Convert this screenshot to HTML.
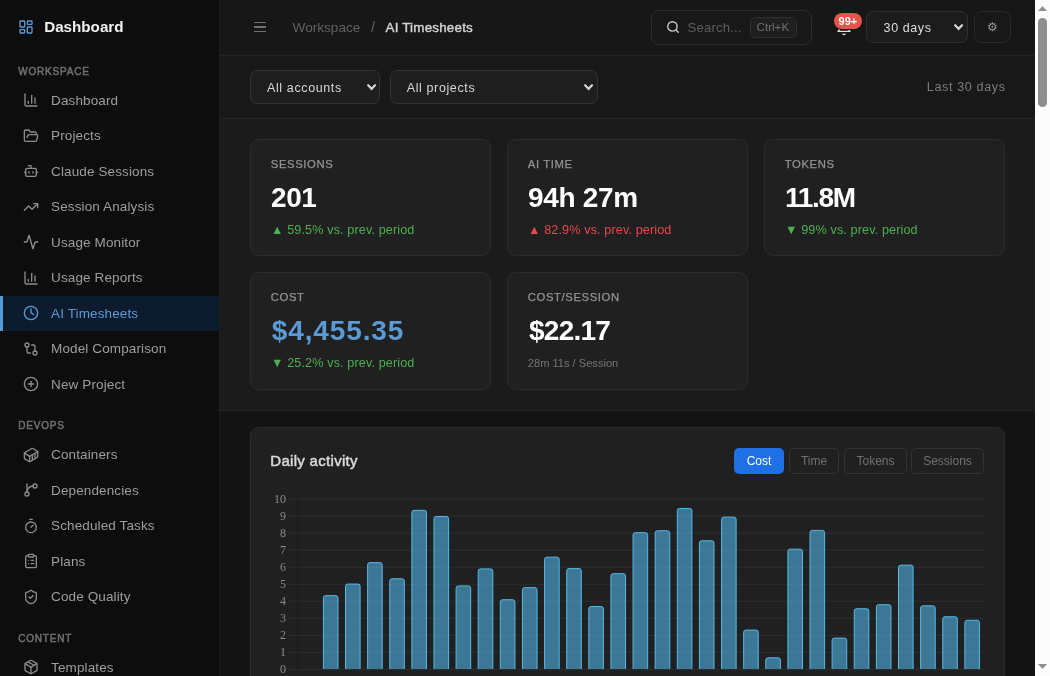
<!DOCTYPE html>
<html><head><meta charset="utf-8"><style>
html,body{margin:0;padding:0;width:1050px;height:676px;overflow:hidden;background:#111;}
body{position:relative;font-family:"Liberation Sans",sans-serif;}
#root{position:absolute;left:0;top:0;width:1050px;height:676px;will-change:transform;}
.t{position:absolute;white-space:nowrap;}
.r{position:absolute;}
</style></head><body>
<div id="root"><div class="r" style="left:0px;top:0px;width:219px;height:676px;background:#0d0d0d"></div><div class="r" style="left:219px;top:0px;width:1px;height:676px;background:#1e1e1e"></div><svg class="r" style="left:18px;top:19px" width="16" height="16" viewBox="0 0 24 24" fill="none" stroke="#5b9bd5" stroke-width="2" stroke-linecap="round" stroke-linejoin="round"><rect width="7" height="9" x="3" y="3" rx="1"/><rect width="7" height="5" x="14" y="3" rx="1"/><rect width="7" height="9" x="14" y="12" rx="1"/><rect width="7" height="5" x="3" y="16" rx="1"/></svg><div class="t" style="left:44.20px;top:18.83px;font-size:15.2px;line-height:15.2px;font-weight:700;color:#f2f2f2;letter-spacing:0px;font-family:'Liberation Sans',sans-serif;">Dashboard</div><div class="t" style="left:18.20px;top:66.83px;font-size:10px;line-height:10px;font-weight:400;color:#707070;letter-spacing:0.8px;font-family:'Liberation Sans',sans-serif;-webkit-text-stroke:0.5px #707070">WORKSPACE</div><svg class="r" style="left:23px;top:92px" width="16" height="16" viewBox="0 0 24 24" fill="none" stroke="#8c8c8c" stroke-width="2" stroke-linecap="round" stroke-linejoin="round"><path d="M3 3v16a2 2 0 0 0 2 2h16"/><path d="M18 17V9"/><path d="M13 17V5"/><path d="M8 17v-3"/></svg><div class="t" style="left:51.10px;top:93.87px;font-size:13.5px;line-height:13.5px;font-weight:400;color:#9e9e9e;letter-spacing:0.12px;font-family:'Liberation Sans',sans-serif;">Dashboard</div><svg class="r" style="left:23px;top:128px" width="16" height="16" viewBox="0 0 24 24" fill="none" stroke="#8c8c8c" stroke-width="2" stroke-linecap="round" stroke-linejoin="round"><path d="m6 14 1.5-2.9A2 2 0 0 1 9.24 10H20a2 2 0 0 1 1.94 2.5l-1.54 6a2 2 0 0 1-1.95 1.5H4a2 2 0 0 1-2-2V5a2 2 0 0 1 2-2h3.9a2 2 0 0 1 1.69.9l.81 1.2a2 2 0 0 0 1.67.9H18a2 2 0 0 1 2 2v2"/></svg><div class="t" style="left:51.10px;top:129.37px;font-size:13.5px;line-height:13.5px;font-weight:400;color:#9e9e9e;letter-spacing:0.12px;font-family:'Liberation Sans',sans-serif;">Projects</div><svg class="r" style="left:23px;top:163px" width="16" height="16" viewBox="0 0 24 24" fill="none" stroke="#8c8c8c" stroke-width="2" stroke-linecap="round" stroke-linejoin="round"><path d="M12 8V4H8"/><rect width="16" height="12" x="4" y="8" rx="2"/><path d="M2 14h2"/><path d="M20 14h2"/><path d="M15 13v2"/><path d="M9 13v2"/></svg><div class="t" style="left:51.10px;top:164.87px;font-size:13.5px;line-height:13.5px;font-weight:400;color:#9e9e9e;letter-spacing:0.12px;font-family:'Liberation Sans',sans-serif;">Claude Sessions</div><svg class="r" style="left:23px;top:199px" width="16" height="16" viewBox="0 0 24 24" fill="none" stroke="#8c8c8c" stroke-width="2" stroke-linecap="round" stroke-linejoin="round"><polyline points="22 7 13.5 15.5 8.5 10.5 2 17"/><polyline points="16 7 22 7 22 13"/></svg><div class="t" style="left:51.10px;top:200.37px;font-size:13.5px;line-height:13.5px;font-weight:400;color:#9e9e9e;letter-spacing:0.12px;font-family:'Liberation Sans',sans-serif;">Session Analysis</div><svg class="r" style="left:23px;top:234px" width="16" height="16" viewBox="0 0 24 24" fill="none" stroke="#8c8c8c" stroke-width="2" stroke-linecap="round" stroke-linejoin="round"><path d="M22 12h-2.48a2 2 0 0 0-1.93 1.46l-2.35 8.36a.25.25 0 0 1-.48 0L9.24 2.18a.25.25 0 0 0-.48 0l-2.35 8.36A2 2 0 0 1 4.49 12H2"/></svg><div class="t" style="left:51.10px;top:235.87px;font-size:13.5px;line-height:13.5px;font-weight:400;color:#9e9e9e;letter-spacing:0.12px;font-family:'Liberation Sans',sans-serif;">Usage Monitor</div><svg class="r" style="left:23px;top:270px" width="16" height="16" viewBox="0 0 24 24" fill="none" stroke="#8c8c8c" stroke-width="2" stroke-linecap="round" stroke-linejoin="round"><path d="M3 3v16a2 2 0 0 0 2 2h16"/><path d="M18 17V9"/><path d="M13 17V5"/><path d="M8 17v-3"/></svg><div class="t" style="left:51.10px;top:271.37px;font-size:13.5px;line-height:13.5px;font-weight:400;color:#9e9e9e;letter-spacing:0.12px;font-family:'Liberation Sans',sans-serif;">Usage Reports</div><div class="r" style="left:0px;top:295.6px;width:219px;height:35px;background:#0c1b2e"></div><div class="r" style="left:0px;top:295.6px;width:3px;height:35px;background:#5b9bd5"></div><svg class="r" style="left:23px;top:305px" width="16" height="16" viewBox="0 0 24 24" fill="none" stroke="#5b9bd5" stroke-width="2" stroke-linecap="round" stroke-linejoin="round"><circle cx="12" cy="12" r="10"/><polyline points="12 6 12 12 16 14"/></svg><div class="t" style="left:51.10px;top:306.87px;font-size:13.5px;line-height:13.5px;font-weight:400;color:#5b9bd5;letter-spacing:0.12px;font-family:'Liberation Sans',sans-serif;">AI Timesheets</div><svg class="r" style="left:23px;top:341px" width="16" height="16" viewBox="0 0 24 24" fill="none" stroke="#8c8c8c" stroke-width="2" stroke-linecap="round" stroke-linejoin="round"><circle cx="18" cy="18" r="3"/><circle cx="6" cy="6" r="3"/><path d="M13 6h3a2 2 0 0 1 2 2v7"/><path d="M11 18H8a2 2 0 0 1-2-2V9"/></svg><div class="t" style="left:51.10px;top:342.37px;font-size:13.5px;line-height:13.5px;font-weight:400;color:#9e9e9e;letter-spacing:0.12px;font-family:'Liberation Sans',sans-serif;">Model Comparison</div><svg class="r" style="left:23px;top:376px" width="16" height="16" viewBox="0 0 24 24" fill="none" stroke="#8c8c8c" stroke-width="2" stroke-linecap="round" stroke-linejoin="round"><circle cx="12" cy="12" r="10"/><path d="M8 12h8"/><path d="M12 8v8"/></svg><div class="t" style="left:51.10px;top:377.87px;font-size:13.5px;line-height:13.5px;font-weight:400;color:#9e9e9e;letter-spacing:0.12px;font-family:'Liberation Sans',sans-serif;">New Project</div><div class="t" style="left:18.20px;top:420.74px;font-size:10px;line-height:10px;font-weight:400;color:#707070;letter-spacing:0.8px;font-family:'Liberation Sans',sans-serif;-webkit-text-stroke:0.5px #707070">DEVOPS</div><svg class="r" style="left:23px;top:447px" width="16" height="16" viewBox="0 0 24 24" fill="none" stroke="#8c8c8c" stroke-width="2" stroke-linecap="round" stroke-linejoin="round"><path d="M22 7.7c0-.6-.4-1.2-.8-1.5l-6.3-3.9a1.72 1.72 0 0 0-1.7 0l-10.3 6c-.5.2-.9.8-.9 1.4v6.6c0 .5.4 1.2.8 1.5l6.3 3.9a1.72 1.72 0 0 0 1.7 0l10.3-6c.5-.3.9-1 .9-1.5Z"/><path d="M10 21.9V14L2.1 9.1"/><path d="m10 14 11.9-6.9"/><path d="M14 19.8v-8.1"/><path d="M18 17.5V9.4"/></svg><div class="t" style="left:51.10px;top:448.17px;font-size:13.5px;line-height:13.5px;font-weight:400;color:#9e9e9e;letter-spacing:0.12px;font-family:'Liberation Sans',sans-serif;">Containers</div><svg class="r" style="left:23px;top:482px" width="16" height="16" viewBox="0 0 24 24" fill="none" stroke="#8c8c8c" stroke-width="2" stroke-linecap="round" stroke-linejoin="round"><line x1="6" x2="6" y1="3" y2="15"/><circle cx="18" cy="6" r="3"/><circle cx="6" cy="18" r="3"/><path d="M15 6a9 9 0 0 0-9 9"/></svg><div class="t" style="left:51.10px;top:483.67px;font-size:13.5px;line-height:13.5px;font-weight:400;color:#9e9e9e;letter-spacing:0.12px;font-family:'Liberation Sans',sans-serif;">Dependencies</div><svg class="r" style="left:23px;top:518px" width="16" height="16" viewBox="0 0 24 24" fill="none" stroke="#8c8c8c" stroke-width="2" stroke-linecap="round" stroke-linejoin="round"><line x1="10" x2="14" y1="2" y2="2"/><line x1="12" x2="15" y1="14" y2="11"/><circle cx="12" cy="14" r="8"/></svg><div class="t" style="left:51.10px;top:519.17px;font-size:13.5px;line-height:13.5px;font-weight:400;color:#9e9e9e;letter-spacing:0.12px;font-family:'Liberation Sans',sans-serif;">Scheduled Tasks</div><svg class="r" style="left:23px;top:553px" width="16" height="16" viewBox="0 0 24 24" fill="none" stroke="#8c8c8c" stroke-width="2" stroke-linecap="round" stroke-linejoin="round"><rect width="8" height="4" x="8" y="2" rx="1" ry="1"/><path d="M16 4h2a2 2 0 0 1 2 2v14a2 2 0 0 1-2 2H6a2 2 0 0 1-2-2V6a2 2 0 0 1 2-2h2"/><path d="M12 11h4"/><path d="M12 16h4"/><path d="M8 11h.01"/><path d="M8 16h.01"/></svg><div class="t" style="left:51.10px;top:554.67px;font-size:13.5px;line-height:13.5px;font-weight:400;color:#9e9e9e;letter-spacing:0.12px;font-family:'Liberation Sans',sans-serif;">Plans</div><svg class="r" style="left:23px;top:589px" width="16" height="16" viewBox="0 0 24 24" fill="none" stroke="#8c8c8c" stroke-width="2" stroke-linecap="round" stroke-linejoin="round"><path d="M20 13c0 5-3.5 7.5-7.66 8.95a1 1 0 0 1-.67-.01C7.5 20.5 4 18 4 13V6a1 1 0 0 1 1-1c2 0 4.5-1.2 6.24-2.72a1.17 1.17 0 0 1 1.52 0C14.51 3.81 17 5 19 5a1 1 0 0 1 1 1z"/><path d="m9 12 2 2 4-4"/></svg><div class="t" style="left:51.10px;top:590.17px;font-size:13.5px;line-height:13.5px;font-weight:400;color:#9e9e9e;letter-spacing:0.12px;font-family:'Liberation Sans',sans-serif;">Code Quality</div><div class="t" style="left:18.20px;top:633.74px;font-size:10px;line-height:10px;font-weight:400;color:#707070;letter-spacing:0.8px;font-family:'Liberation Sans',sans-serif;-webkit-text-stroke:0.5px #707070">CONTENT</div><svg class="r" style="left:23px;top:659px" width="16" height="16" viewBox="0 0 24 24" fill="none" stroke="#8c8c8c" stroke-width="2" stroke-linecap="round" stroke-linejoin="round"><path d="M11 21.73a2 2 0 0 0 2 0l7-4A2 2 0 0 0 21 16V8a2 2 0 0 0-1-1.73l-7-4a2 2 0 0 0-2 0l-7 4A2 2 0 0 0 3 8v8a2 2 0 0 0 1 1.73z"/><path d="M12 22V12"/><path d="m3.3 7 7.703 4.734a2 2 0 0 0 1.994 0L20.7 7"/><path d="m7.5 4.27 9 5.15"/></svg><div class="t" style="left:51.10px;top:661.17px;font-size:13.5px;line-height:13.5px;font-weight:400;color:#9e9e9e;letter-spacing:0.12px;font-family:'Liberation Sans',sans-serif;">Templates</div><div class="r" style="left:220px;top:0px;width:815px;height:55px;background:#171717"></div><div class="r" style="left:220px;top:55px;width:815px;height:1px;background:#242424"></div><div class="r" style="left:254px;top:21.7px;width:12.4px;height:1.3px;background:#6f6f6f"></div><div class="r" style="left:254px;top:26.3px;width:12.4px;height:1.3px;background:#6f6f6f"></div><div class="r" style="left:254px;top:30.85px;width:12.4px;height:1.3px;background:#6f6f6f"></div><div class="t" style="left:292.60px;top:20.89px;font-size:13.6px;line-height:13.6px;font-weight:400;color:#626262;letter-spacing:0px;font-family:'Liberation Sans',sans-serif;">Workspace</div><div class="t" style="left:371.00px;top:20.33px;font-size:14.5px;line-height:14.5px;font-weight:400;color:#626262;letter-spacing:0px;font-family:'Liberation Sans',sans-serif;">/</div><div class="t" style="left:385.50px;top:21.06px;font-size:13.4px;line-height:13.4px;font-weight:400;color:#d4d4d4;letter-spacing:0.2px;font-family:'Liberation Sans',sans-serif;-webkit-text-stroke:0.4px #d4d4d4">AI Timesheets</div><div class="r" style="left:651px;top:10px;width:159px;height:33px;border:1px solid #2c2c2c;border-radius:8px;background:#181818"></div><svg class="r" style="left:665.7px;top:19.6px" width="14" height="14" viewBox="0 0 24 24" fill="none" stroke="#c8c8c8" stroke-width="2.4" stroke-linecap="round" stroke-linejoin="round"><circle cx="11" cy="11" r="8"/><path d="m21 21-4.3-4.3"/></svg><div class="t" style="left:687.60px;top:20.83px;font-size:13.2px;line-height:13.2px;font-weight:400;color:#5e5e5e;letter-spacing:0.12px;font-family:'Liberation Sans',sans-serif;">Search...</div><div class="r" style="left:750px;top:17px;width:45px;height:19px;border:1px solid #303030;border-radius:5px;background:#1f1f1f"></div><div class="t" style="left:756.60px;top:21.28px;font-size:11.6px;line-height:11.6px;font-weight:400;color:#707070;letter-spacing:0px;font-family:'Liberation Sans',sans-serif;">Ctrl+K</div><svg class="r" style="left:836px;top:19.6px" width="16" height="16" viewBox="0 0 24 24" fill="none" stroke="#e0e0e0" stroke-width="2" stroke-linecap="round" stroke-linejoin="round"><path d="M6 8a6 6 0 0 1 12 0c0 7 3 9 3 9H3s3-2 3-9"/><path d="M10.3 21a1.94 1.94 0 0 0 3.4 0"/></svg><div class="r" style="left:834px;top:13px;width:28px;height:16px;background:#e5534b;border-radius:8px;box-shadow:0 0 0 1px #171717"></div><div class="t" style="left:838.60px;top:15.59px;font-size:11px;line-height:11px;font-weight:700;color:#ffffff;letter-spacing:0px;font-family:'Liberation Sans',sans-serif;">99+</div><div class="r" style="left:866px;top:11px;width:100px;height:30px;border:1px solid #303030;border-radius:7px;background:#1c1c1c"></div><div class="t" style="left:883.60px;top:22.02px;font-size:12.5px;line-height:12.5px;font-weight:400;color:#dedede;letter-spacing:0.6px;font-family:'Liberation Sans',sans-serif;">30 days</div><svg class="r" style="left:954.2px;top:24.2px" width="10" height="7" viewBox="0 0 10 7" fill="none" stroke="#d4d4d4" stroke-width="2.2" stroke-linecap="round" stroke-linejoin="miter"><path d="M1.2 1.2L4.6 4.8L8 1.2" /></svg><div class="r" style="left:974px;top:11px;width:35px;height:30px;border:1px solid #2a2a2a;border-radius:8px;background:#181818"></div><div class="t" style="left:986.50px;top:21.04px;font-size:12px;line-height:12px;font-weight:400;color:#9a9a9a;letter-spacing:0px;font-family:'Liberation Sans',sans-serif;">&#9881;</div><div class="r" style="left:220px;top:56px;width:815px;height:62px;background:#181818"></div><div class="r" style="left:220px;top:118px;width:815px;height:1px;background:#242424"></div><div class="r" style="left:250px;top:70px;width:128px;height:32px;border:1px solid #333;border-radius:7px;background:#1e1e1e"></div><div class="t" style="left:267.00px;top:82.12px;font-size:12.5px;line-height:12.5px;font-weight:400;color:#d8d8d8;letter-spacing:0.62px;font-family:'Liberation Sans',sans-serif;">All accounts</div><svg class="r" style="left:366.6px;top:84px" width="10" height="7" viewBox="0 0 10 7" fill="none" stroke="#d4d4d4" stroke-width="2.2" stroke-linecap="round" stroke-linejoin="miter"><path d="M1.2 1.2L4.6 4.8L8 1.2" /></svg><div class="r" style="left:390px;top:70px;width:206px;height:32px;border:1px solid #333;border-radius:7px;background:#1e1e1e"></div><div class="t" style="left:406.70px;top:82.12px;font-size:12.5px;line-height:12.5px;font-weight:400;color:#d8d8d8;letter-spacing:0.62px;font-family:'Liberation Sans',sans-serif;">All projects</div><svg class="r" style="left:584.4px;top:84px" width="10" height="7" viewBox="0 0 10 7" fill="none" stroke="#d4d4d4" stroke-width="2.2" stroke-linecap="round" stroke-linejoin="miter"><path d="M1.2 1.2L4.6 4.8L8 1.2" /></svg><div class="t" style="left:926.80px;top:81.02px;font-size:12.5px;line-height:12.5px;font-weight:400;color:#7c7c7c;letter-spacing:0.66px;font-family:'Liberation Sans',sans-serif;">Last 30 days</div><div class="r" style="left:220px;top:119px;width:815px;height:291px;background:#1b1b1b"></div><div class="r" style="left:220px;top:410px;width:815px;height:1px;background:#242424"></div><div class="r" style="left:250px;top:139px;width:239px;height:115px;border:1px solid #2c2c2c;border-radius:9px;background:#202020"></div><div class="t" style="left:270.80px;top:159.43px;font-size:11.3px;line-height:11.3px;font-weight:400;color:#939393;letter-spacing:0.6px;font-family:'Liberation Sans',sans-serif;-webkit-text-stroke:0.25px #939393">SESSIONS</div><div class="t" style="left:271.10px;top:184.20px;font-size:28px;line-height:28px;font-weight:700;color:#ffffff;letter-spacing:-0.5px;font-family:'Liberation Sans',sans-serif;">201</div><div class="t" style="left:271.00px;top:224.03px;font-size:12.6px;line-height:12.6px;font-weight:400;color:#4caf50;letter-spacing:0.13px;font-family:'Liberation Sans',sans-serif;">&#9650; 59.5% vs. prev. period</div><div class="r" style="left:507px;top:139px;width:239px;height:115px;border:1px solid #2c2c2c;border-radius:9px;background:#202020"></div><div class="t" style="left:527.80px;top:159.43px;font-size:11.3px;line-height:11.3px;font-weight:400;color:#939393;letter-spacing:0.6px;font-family:'Liberation Sans',sans-serif;-webkit-text-stroke:0.25px #939393">AI TIME</div><div class="t" style="left:528.10px;top:184.20px;font-size:28px;line-height:28px;font-weight:700;color:#ffffff;letter-spacing:-0.35px;font-family:'Liberation Sans',sans-serif;">94h 27m</div><div class="t" style="left:528.00px;top:224.03px;font-size:12.6px;line-height:12.6px;font-weight:400;color:#e5484d;letter-spacing:0.13px;font-family:'Liberation Sans',sans-serif;">&#9650; 82.9% vs. prev. period</div><div class="r" style="left:764px;top:139px;width:239px;height:115px;border:1px solid #2c2c2c;border-radius:9px;background:#202020"></div><div class="t" style="left:784.80px;top:159.43px;font-size:11.3px;line-height:11.3px;font-weight:400;color:#939393;letter-spacing:0.6px;font-family:'Liberation Sans',sans-serif;-webkit-text-stroke:0.25px #939393">TOKENS</div><div class="t" style="left:785.10px;top:184.20px;font-size:28px;line-height:28px;font-weight:700;color:#ffffff;letter-spacing:-1.3px;font-family:'Liberation Sans',sans-serif;">11.8M</div><div class="t" style="left:785.00px;top:224.03px;font-size:12.6px;line-height:12.6px;font-weight:400;color:#4caf50;letter-spacing:0.13px;font-family:'Liberation Sans',sans-serif;">&#9660; 99% vs. prev. period</div><div class="r" style="left:250px;top:272px;width:239px;height:116px;border:1px solid #2c2c2c;border-radius:9px;background:#202020"></div><div class="t" style="left:270.80px;top:292.43px;font-size:11.3px;line-height:11.3px;font-weight:400;color:#939393;letter-spacing:0.6px;font-family:'Liberation Sans',sans-serif;-webkit-text-stroke:0.25px #939393">COST</div><div class="t" style="left:271.80px;top:317.20px;font-size:28px;line-height:28px;font-weight:700;color:#5b9bd5;letter-spacing:0.87px;font-family:'Liberation Sans',sans-serif;">$4,455.35</div><div class="t" style="left:271.00px;top:357.03px;font-size:12.6px;line-height:12.6px;font-weight:400;color:#4caf50;letter-spacing:0.13px;font-family:'Liberation Sans',sans-serif;">&#9660; 25.2% vs. prev. period</div><div class="r" style="left:507px;top:272px;width:239px;height:116px;border:1px solid #2c2c2c;border-radius:9px;background:#202020"></div><div class="t" style="left:527.80px;top:292.43px;font-size:11.3px;line-height:11.3px;font-weight:400;color:#939393;letter-spacing:0.6px;font-family:'Liberation Sans',sans-serif;-webkit-text-stroke:0.25px #939393">COST/SESSION</div><div class="t" style="left:529.00px;top:317.20px;font-size:28px;line-height:28px;font-weight:700;color:#ffffff;letter-spacing:-0.75px;font-family:'Liberation Sans',sans-serif;">$22.17</div><div class="t" style="left:527.80px;top:357.60px;font-size:11.1px;line-height:11.1px;font-weight:400;color:#767676;letter-spacing:0px;font-family:'Liberation Sans',sans-serif;">28m 11s / Session</div><div class="r" style="left:220px;top:411px;width:815px;height:265px;background:#131313"></div><div class="r" style="left:250px;top:427px;width:753px;height:300px;border:1px solid #2c2c2c;border-radius:9px;background:#202020"></div><div class="t" style="left:270.30px;top:453.00px;font-size:15px;line-height:15px;font-weight:400;color:#dadada;letter-spacing:0.3px;font-family:'Liberation Sans',sans-serif;-webkit-text-stroke:0.5px #dadada">Daily activity</div><div class="r" style="left:734px;top:448px;width:50px;height:26px;background:#1f6fe5;border-radius:5px"></div><div class="t" style="left:734px;top:448px;width:50px;height:26px;line-height:26px;text-align:center;font-size:12px;color:#fff">Cost</div><div class="r" style="left:789px;top:448px;width:48px;height:24px;border:1px solid #333;border-radius:5px"></div><div class="t" style="left:789px;top:448px;width:50px;height:26px;line-height:26px;text-align:center;font-size:12px;color:#717171">Time</div><div class="r" style="left:844px;top:448px;width:61px;height:24px;border:1px solid #333;border-radius:5px"></div><div class="t" style="left:844px;top:448px;width:63px;height:26px;line-height:26px;text-align:center;font-size:12px;color:#717171">Tokens</div><div class="r" style="left:911px;top:448px;width:71px;height:24px;border:1px solid #333;border-radius:5px"></div><div class="t" style="left:911px;top:448px;width:73px;height:26px;line-height:26px;text-align:center;font-size:12px;color:#717171">Sessions</div><svg class="r" style="left:0;top:0" width="1050" height="676"><line x1="289" x2="984" y1="669.40" y2="669.40" stroke="#2e2e2e" stroke-width="1"/><line x1="289" x2="984" y1="652.37" y2="652.37" stroke="#2e2e2e" stroke-width="1"/><line x1="289" x2="984" y1="635.34" y2="635.34" stroke="#2e2e2e" stroke-width="1"/><line x1="289" x2="984" y1="618.31" y2="618.31" stroke="#2e2e2e" stroke-width="1"/><line x1="289" x2="984" y1="601.28" y2="601.28" stroke="#2e2e2e" stroke-width="1"/><line x1="289" x2="984" y1="584.25" y2="584.25" stroke="#2e2e2e" stroke-width="1"/><line x1="289" x2="984" y1="567.22" y2="567.22" stroke="#2e2e2e" stroke-width="1"/><line x1="289" x2="984" y1="550.19" y2="550.19" stroke="#2e2e2e" stroke-width="1"/><line x1="289" x2="984" y1="533.16" y2="533.16" stroke="#2e2e2e" stroke-width="1"/><line x1="289" x2="984" y1="516.13" y2="516.13" stroke="#2e2e2e" stroke-width="1"/><line x1="289" x2="984" y1="499.10" y2="499.10" stroke="#2e2e2e" stroke-width="1"/><line x1="297.6" x2="297.6" y1="499" y2="669.5" stroke="#1a1a1a" stroke-width="1"/><path d="M323.38,668.90 V597.85 Q323.38,595.65 325.58,595.65 H335.78 Q337.98,595.65 337.98,597.85 V668.90" fill="rgba(80,180,230,0.6)" stroke="#55b9ea" stroke-width="1"/><path d="M345.50,668.90 V586.27 Q345.50,584.07 347.70,584.07 H357.90 Q360.10,584.07 360.10,586.27 V668.90" fill="rgba(80,180,230,0.6)" stroke="#55b9ea" stroke-width="1"/><path d="M367.62,668.90 V564.81 Q367.62,562.61 369.82,562.61 H380.02 Q382.22,562.61 382.22,564.81 V668.90" fill="rgba(80,180,230,0.6)" stroke="#55b9ea" stroke-width="1"/><path d="M389.74,668.90 V580.99 Q389.74,578.79 391.94,578.79 H402.14 Q404.34,578.79 404.34,580.99 V668.90" fill="rgba(80,180,230,0.6)" stroke="#55b9ea" stroke-width="1"/><path d="M411.86,668.90 V512.53 Q411.86,510.33 414.06,510.33 H424.26 Q426.46,510.33 426.46,512.53 V668.90" fill="rgba(80,180,230,0.6)" stroke="#55b9ea" stroke-width="1"/><path d="M433.98,668.90 V518.66 Q433.98,516.46 436.18,516.46 H446.38 Q448.58,516.46 448.58,518.66 V668.90" fill="rgba(80,180,230,0.6)" stroke="#55b9ea" stroke-width="1"/><path d="M456.10,668.90 V588.14 Q456.10,585.94 458.30,585.94 H468.50 Q470.70,585.94 470.70,588.14 V668.90" fill="rgba(80,180,230,0.6)" stroke="#55b9ea" stroke-width="1"/><path d="M478.22,668.90 V571.11 Q478.22,568.91 480.42,568.91 H490.62 Q492.82,568.91 492.82,571.11 V668.90" fill="rgba(80,180,230,0.6)" stroke="#55b9ea" stroke-width="1"/><path d="M500.34,668.90 V601.94 Q500.34,599.74 502.54,599.74 H512.74 Q514.94,599.74 514.94,601.94 V668.90" fill="rgba(80,180,230,0.6)" stroke="#55b9ea" stroke-width="1"/><path d="M522.46,668.90 V589.85 Q522.46,587.65 524.66,587.65 H534.86 Q537.06,587.65 537.06,589.85 V668.90" fill="rgba(80,180,230,0.6)" stroke="#55b9ea" stroke-width="1"/><path d="M544.58,668.90 V559.36 Q544.58,557.16 546.78,557.16 H556.98 Q559.18,557.16 559.18,559.36 V668.90" fill="rgba(80,180,230,0.6)" stroke="#55b9ea" stroke-width="1"/><path d="M566.70,668.90 V570.77 Q566.70,568.57 568.90,568.57 H579.10 Q581.30,568.57 581.30,570.77 V668.90" fill="rgba(80,180,230,0.6)" stroke="#55b9ea" stroke-width="1"/><path d="M588.82,668.90 V608.75 Q588.82,606.55 591.02,606.55 H601.22 Q603.42,606.55 603.42,608.75 V668.90" fill="rgba(80,180,230,0.6)" stroke="#55b9ea" stroke-width="1"/><path d="M610.94,668.90 V575.88 Q610.94,573.68 613.14,573.68 H623.34 Q625.54,573.68 625.54,575.88 V668.90" fill="rgba(80,180,230,0.6)" stroke="#55b9ea" stroke-width="1"/><path d="M633.06,668.90 V534.84 Q633.06,532.64 635.26,532.64 H645.46 Q647.66,532.64 647.66,534.84 V668.90" fill="rgba(80,180,230,0.6)" stroke="#55b9ea" stroke-width="1"/><path d="M655.18,668.90 V532.96 Q655.18,530.76 657.38,530.76 H667.58 Q669.78,530.76 669.78,532.96 V668.90" fill="rgba(80,180,230,0.6)" stroke="#55b9ea" stroke-width="1"/><path d="M677.30,668.90 V510.66 Q677.30,508.46 679.50,508.46 H689.70 Q691.90,508.46 691.90,510.66 V668.90" fill="rgba(80,180,230,0.6)" stroke="#55b9ea" stroke-width="1"/><path d="M699.42,668.90 V543.01 Q699.42,540.81 701.62,540.81 H711.82 Q714.02,540.81 714.02,543.01 V668.90" fill="rgba(80,180,230,0.6)" stroke="#55b9ea" stroke-width="1"/><path d="M721.54,668.90 V519.34 Q721.54,517.14 723.74,517.14 H733.94 Q736.14,517.14 736.14,519.34 V668.90" fill="rgba(80,180,230,0.6)" stroke="#55b9ea" stroke-width="1"/><path d="M743.66,668.90 V632.25 Q743.66,630.05 745.86,630.05 H756.06 Q758.26,630.05 758.26,632.25 V668.90" fill="rgba(80,180,230,0.6)" stroke="#55b9ea" stroke-width="1"/><path d="M765.78,668.90 V660.01 Q765.78,657.81 767.98,657.81 H778.18 Q780.38,657.81 780.38,660.01 V668.90" fill="rgba(80,180,230,0.6)" stroke="#55b9ea" stroke-width="1"/><path d="M787.90,668.90 V551.36 Q787.90,549.16 790.10,549.16 H800.30 Q802.50,549.16 802.50,551.36 V668.90" fill="rgba(80,180,230,0.6)" stroke="#55b9ea" stroke-width="1"/><path d="M810.02,668.90 V532.62 Q810.02,530.42 812.22,530.42 H822.42 Q824.62,530.42 824.62,532.62 V668.90" fill="rgba(80,180,230,0.6)" stroke="#55b9ea" stroke-width="1"/><path d="M832.14,668.90 V640.25 Q832.14,638.05 834.34,638.05 H844.54 Q846.74,638.05 846.74,640.25 V668.90" fill="rgba(80,180,230,0.6)" stroke="#55b9ea" stroke-width="1"/><path d="M854.26,668.90 V610.96 Q854.26,608.76 856.46,608.76 H866.66 Q868.86,608.76 868.86,610.96 V668.90" fill="rgba(80,180,230,0.6)" stroke="#55b9ea" stroke-width="1"/><path d="M876.38,668.90 V606.88 Q876.38,604.68 878.58,604.68 H888.78 Q890.98,604.68 890.98,606.88 V668.90" fill="rgba(80,180,230,0.6)" stroke="#55b9ea" stroke-width="1"/><path d="M898.50,668.90 V567.37 Q898.50,565.17 900.70,565.17 H910.90 Q913.10,565.17 913.10,567.37 V668.90" fill="rgba(80,180,230,0.6)" stroke="#55b9ea" stroke-width="1"/><path d="M920.62,668.90 V608.07 Q920.62,605.87 922.82,605.87 H933.02 Q935.22,605.87 935.22,608.07 V668.90" fill="rgba(80,180,230,0.6)" stroke="#55b9ea" stroke-width="1"/><path d="M942.74,668.90 V618.97 Q942.74,616.77 944.94,616.77 H955.14 Q957.34,616.77 957.34,618.97 V668.90" fill="rgba(80,180,230,0.6)" stroke="#55b9ea" stroke-width="1"/><path d="M964.86,668.90 V622.54 Q964.86,620.34 967.06,620.34 H977.26 Q979.46,620.34 979.46,622.54 V668.90" fill="rgba(80,180,230,0.6)" stroke="#55b9ea" stroke-width="1"/><text x="286.1" y="673.20" text-anchor="end" font-family="Liberation Serif" font-size="12" fill="#8a8a8a">0</text><text x="286.1" y="656.17" text-anchor="end" font-family="Liberation Serif" font-size="12" fill="#8a8a8a">1</text><text x="286.1" y="639.14" text-anchor="end" font-family="Liberation Serif" font-size="12" fill="#8a8a8a">2</text><text x="286.1" y="622.11" text-anchor="end" font-family="Liberation Serif" font-size="12" fill="#8a8a8a">3</text><text x="286.1" y="605.08" text-anchor="end" font-family="Liberation Serif" font-size="12" fill="#8a8a8a">4</text><text x="286.1" y="588.05" text-anchor="end" font-family="Liberation Serif" font-size="12" fill="#8a8a8a">5</text><text x="286.1" y="571.02" text-anchor="end" font-family="Liberation Serif" font-size="12" fill="#8a8a8a">6</text><text x="286.1" y="553.99" text-anchor="end" font-family="Liberation Serif" font-size="12" fill="#8a8a8a">7</text><text x="286.1" y="536.96" text-anchor="end" font-family="Liberation Serif" font-size="12" fill="#8a8a8a">8</text><text x="286.1" y="519.93" text-anchor="end" font-family="Liberation Serif" font-size="12" fill="#8a8a8a">9</text><text x="286.1" y="502.90" text-anchor="end" font-family="Liberation Serif" font-size="12" fill="#8a8a8a">10</text></svg><div class="r" style="left:1035px;top:0px;width:15px;height:676px;background:#fcfcfc"></div><svg class="r" style="left:1035px;top:0" width="15" height="676"><path d="M3 11 L7.5 6 L12 11 Z" fill="#8f8f8f"/><rect x="3" y="18" width="9" height="89" rx="4.5" fill="#8e8e8e"/><path d="M3 664 L12 664 L7.5 669 Z" fill="#8f8f8f"/></svg></div>
</body></html>
